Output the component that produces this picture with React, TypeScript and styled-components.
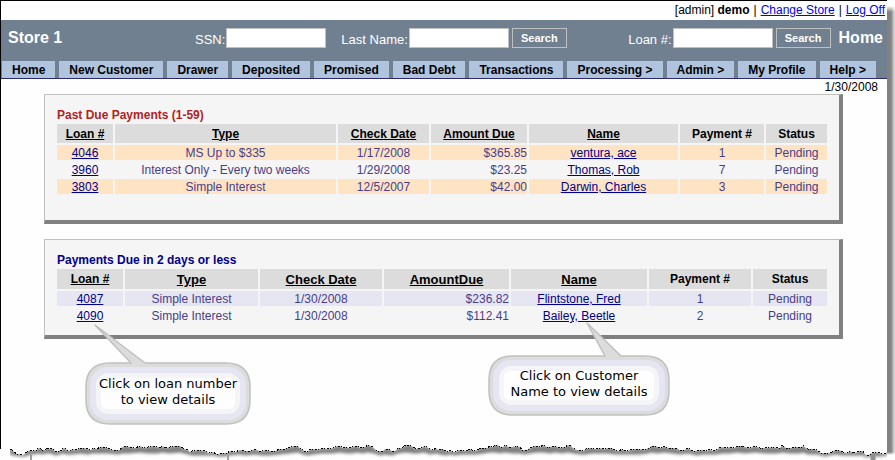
import React from "react";
import styled, { createGlobalStyle } from "styled-components";

const GlobalStyle = createGlobalStyle`
  *, *::before, *::after { box-sizing: border-box; }
  body {
    margin: 0;
    background: #fefefe;
    color: #000;
    font: 12px/15px "Liberation Sans", Arial, sans-serif;
  }
`;

const Page = styled.div`
  display: flex;
  min-height: 100vh;
`;

const Sheet = styled.div`
  flex: 1;
  min-width: 0;
  display: flex;
  flex-direction: column;
`;

const Content = styled.div`
  flex: 1;
  border-top: 1px solid #000;
  border-left: 1px solid #000;
`;

const EdgeShadow = styled.div`
  flex: 0 0 8px;
  margin: 6px 0 5px;
  background: linear-gradient(to right, #808080 0, #848484 4px, #b4b4b4 6px, #e4e4e4 8px);
  mask-image: linear-gradient(to bottom, transparent 0, #000 6px, #000 calc(100% - 3px), transparent 100%);
`;

const AccountBar = styled.div`
  display: flex;
  justify-content: flex-end;
  gap: 4px;
  height: 19px;
  padding: 2px 2px 0 0;
`;

const AccountLink = styled.a`
  color: #0000ff;
`;

const Header = styled.header`
  display: flex;
  align-items: flex-start;
  height: 41px;
  padding: 8px 4px 0 7px;
  background: #708090;
  color: #fff;
`;

const StoreName = styled.h1`
  width: 187px;
  margin: 0;
  font-size: 16px;
  line-height: 19px;
`;

const PageName = styled.h2`
  margin: 0 0 0 8px;
  font-size: 16px;
  line-height: 19px;
`;

const SearchForm = styled.form<{ $end?: boolean }>`
  display: flex;
  align-items: flex-start;
  gap: 3px;
  margin-left: ${(p) => (p.$end ? "auto" : "0")};
`;

const Field = styled.label`
  display: flex;
  align-items: flex-start;
  gap: 1px;
  font-size: 13px;

  & + & {
    margin-left: 12px;
  }
`;

const FieldName = styled.span`
  padding-top: 3px;
  line-height: 17px;
`;

const FieldInput = styled.input`
  width: 100px;
  height: 20px;
  padding: 0 3px;
  border: 1px solid #c0c0c0;
  border-radius: 0;
  background: #fff;
  font: inherit;
`;

const SearchButton = styled.button`
  width: 55px;
  height: 20px;
  padding: 0;
  border: 1px solid #c0c0c0;
  background: #708090;
  color: #fff;
  font: bold 11px/18px "Liberation Sans", Arial, sans-serif;
`;

const Nav = styled.nav`
  display: flex;
  gap: 4px;
  padding-left: 1px;
  border-bottom: 1px solid #2a2a6c;
  background: #708090;
`;

const NavLink = styled.a`
  padding: 1px 10px 0;
  background: #b0c4de;
  color: #000;
  font-weight: bold;
  line-height: 16px;
  text-decoration: none;
  white-space: nowrap;
`;

const DateLine = styled.div`
  padding: 1px 9px 0 0;
  line-height: 14px;
  text-align: right;
`;

const Panel = styled.section<{ $bottom: number }>`
  position: relative;
  margin: 0 44px 15px 43px;
  padding: 12px 10px ${(p) => p.$bottom}px;
  border: solid #808080;
  border-width: 1px 4px 4px 1px;
  border-top-color: #c0c0c0;
  border-left-color: #c0c0c0;
  background: #f5f5f5;
`;

const Grid = styled.table`
  width: 100%;
  table-layout: fixed;
  border-spacing: 2px;
`;

const Title = styled.caption<{ $color: string }>`
  padding: 1px 0 0 2px;
  color: ${(p) => p.$color};
  font-weight: bold;
  line-height: 14px;
  text-align: left;
`;

const Column = styled.col<{ $width: number }>`
  width: ${(p) => p.$width}px;
`;

const HeadCell = styled.th<{ $large?: boolean; $height: number }>`
  height: ${(p) => p.$height}px;
  padding: 1px 0 0;
  background: #dcdcdc;
  font-size: ${(p) => (p.$large ? 13 : 12)}px;
  vertical-align: middle;
`;

const SortLink = styled.a`
  color: #000;
`;

const Row = styled.tr<{ $stripe: string }>`
  &:nth-child(odd) > td {
    background: ${(p) => p.$stripe};
  }
`;

const Cell = styled.td<{ $align?: string }>`
  padding: 1px 0 0;
  color: #483d8b;
  line-height: 14px;
  text-align: ${(p) => p.$align ?? "center"};
  white-space: nowrap;
`;

const CellLink = styled.a`
  color: #00008b;
`;

const Callout = styled.aside<{ $left: number; $top: number; $width: number; $height: number; $pad: number }>`
  position: absolute;
  left: ${(p) => p.$left}px;
  top: ${(p) => p.$top}px;
  width: ${(p) => p.$width}px;
  height: ${(p) => p.$height}px;
  padding-top: ${(p) => p.$pad}px;
  font: 13px/16px "DejaVu Sans", Verdana, sans-serif;
  text-align: center;
  white-space: pre-line;
`;

const Bubble = styled.svg`
  position: absolute;
  inset: 0;
  width: 100%;
  height: 100%;
`;

const CalloutText = styled.p`
  position: relative;
  margin: 0;
`;

const Tear = styled.svg`
  display: block;
  width: 100%;
  height: 20px;
`;

const navItems = [
  "Home", "New Customer", "Drawer", "Deposited", "Promised", "Bad Debt",
  "Transactions", "Processing >", "Admin >", "My Profile", "Help >",
];

type Payment = [loan: string, type: string, date: string, amount: string, name: string, number: string, status: string];

interface HeadSpec {
  text: string;
  width: number;
  sortable?: boolean;
  large?: boolean;
}

const pastDueHeads: HeadSpec[] = [
  { text: "Loan #", width: 56, sortable: true },
  { text: "Type", width: 221, sortable: true },
  { text: "Check Date", width: 91, sortable: true },
  { text: "Amount Due", width: 96, sortable: true },
  { text: "Name", width: 149, sortable: true },
  { text: "Payment #", width: 84 },
  { text: "Status", width: 61 },
];

const pastDueRows: Payment[] = [
  ["4046", "MS Up to $335", "1/17/2008", "$365.85", "ventura, ace", "1", "Pending"],
  ["3960", "Interest Only - Every two weeks", "1/29/2008", "$23.25", "Thomas, Rob", "7", "Pending"],
  ["3803", "Simple Interest", "12/5/2007", "$42.00", "Darwin, Charles", "3", "Pending"],
];

const upcomingHeads: HeadSpec[] = [
  { text: "Loan #", width: 66, sortable: true },
  { text: "Type", width: 133, sortable: true, large: true },
  { text: "Check Date", width: 122, sortable: true, large: true },
  { text: "AmountDue", width: 125, sortable: true, large: true },
  { text: "Name", width: 136, sortable: true, large: true },
  { text: "Payment #", width: 102 },
  { text: "Status", width: 74 },
];

const upcomingRows: Payment[] = [
  ["4087", "Simple Interest", "1/30/2008", "$236.82", "Flintstone, Fred", "1", "Pending"],
  ["4090", "Simple Interest", "1/30/2008", "$112.41", "Bailey, Beetle", "2", "Pending"],
];

interface PaymentsProps {
  title: string;
  color: string;
  stripe: string;
  headHeight: number;
  heads: HeadSpec[];
  rows: Payment[];
}

function Payments({ title, color, stripe, headHeight, heads, rows }: PaymentsProps) {
  return (
    <Grid>
      <Title $color={color}>{title}</Title>
      <colgroup>
        {heads.map((h) => <Column key={h.text} $width={h.width} />)}
      </colgroup>
      <thead>
        <tr>
          {heads.map((h) => (
            <HeadCell key={h.text} scope="col" $large={h.large} $height={headHeight}>
              {h.sortable ? <SortLink href="#">{h.text}</SortLink> : h.text}
            </HeadCell>
          ))}
        </tr>
      </thead>
      <tbody>
        {rows.map(([loan, type, date, amount, name, number, status]) => (
          <Row key={loan} $stripe={stripe}>
            <Cell><CellLink href="#">{loan}</CellLink></Cell>
            <Cell>{type}</Cell>
            <Cell>{date}</Cell>
            <Cell $align="right">{amount}</Cell>
            <Cell><CellLink href="#">{name}</CellLink></Cell>
            <Cell>{number}</Cell>
            <Cell>{status}</Cell>
          </Row>
        ))}
      </tbody>
    </Grid>
  );
}

interface NoteProps {
  left: number;
  top: number;
  width: number;
  height: number;
  bodyTop: number;
  tip: [number, number];
  base: [number, number];
  textTop: number;
  text: string;
}

function Note({ left, top, width, height, bodyTop, tip, base, textTop, text }: NoteProps) {
  const r = 24;
  const l = 1;
  const t = bodyTop + 1;
  const right = width - 1;
  const bottom = height - 1;
  const outline =
    `M${l + r} ${t} H${base[0]} L${tip[0]} ${tip[1]} L${base[1]} ${t} H${right - r} ` +
    `Q${right} ${t} ${right} ${t + r} V${bottom - r} Q${right} ${bottom} ${right - r} ${bottom} ` +
    `H${l + r} Q${l} ${bottom} ${l} ${bottom - r} V${t + r} Q${l} ${t} ${l + r} ${t} Z`;
  const layers: [number, string, number][] = [
    [4, "#e6e6f2", 18],
    [10, "#f5f5f7", 12],
    [15, "#fefefe", 6],
  ];
  return (
    <Callout $left={left} $top={top} $width={width} $height={height} $pad={textTop}>
      <Bubble viewBox={`0 0 ${width} ${height}`} aria-hidden="true">
        <path d={outline} fill="#dcdcdc" stroke="#c0c0c0" strokeWidth="1.5" strokeLinejoin="round" />
        {layers.map(([inset, fill, radius]) => (
          <rect
            key={inset}
            x={l + inset}
            y={t + inset}
            width={right - l - inset * 2}
            height={bottom - t - inset * 2}
            rx={radius}
            fill={fill}
          />
        ))}
      </Bubble>
      <CalloutText>{text}</CalloutText>
    </Callout>
  );
}

const tearProfile: [number, number][] = [
  [10, 9], [13, 11], [20, 14], [25, 13], [31, 10], [35, 10], [38, 8], [42, 10], [47, 8], [51, 8], [55, 11], [60, 10],
  [63, 8], [67, 10], [72, 9], [80, 8], [88, 9], [93, 8], [100, 7], [108, 8], [118, 10], [122, 7], [130, 7], [140, 6],
  [148, 7], [158, 7], [162, 6], [170, 7], [180, 6], [188, 10], [192, 11], [205, 11], [213, 12], [218, 14], [224, 13],
  [230, 11], [240, 10], [245, 11], [255, 9], [262, 11], [270, 11], [280, 9], [290, 7], [298, 6], [303, 10], [308, 11],
  [313, 9], [322, 8], [333, 8], [340, 6], [346, 7], [352, 7], [358, 6], [362, 7], [368, 5], [374, 8], [380, 11],
  [385, 9], [392, 11], [398, 8], [406, 5], [413, 7], [418, 8], [424, 6], [430, 9], [436, 8], [440, 9], [446, 11],
  [450, 10], [455, 12], [462, 10], [470, 9], [477, 10], [484, 8], [490, 6], [495, 5], [500, 7], [505, 5], [512, 7],
  [520, 7], [524, 10], [530, 8], [537, 6], [543, 5], [550, 7], [556, 6], [562, 7], [568, 5], [573, 8], [580, 10],
  [586, 9], [592, 8], [600, 8], [608, 8], [615, 10], [622, 9], [630, 10], [640, 9], [648, 8], [651, 6], [658, 7],
  [664, 6], [672, 8], [680, 10], [688, 8], [697, 11], [703, 10], [710, 9], [716, 10], [722, 7], [730, 7], [737, 6],
  [745, 7], [755, 6], [765, 8], [778, 8], [782, 5], [790, 8], [800, 7], [803, 5], [808, 9], [817, 10], [825, 13],
  [835, 10], [843, 12], [850, 11], [857, 12], [863, 11], [866, 15], [872, 13], [880, 13], [887, 12],
];

// Adds one-pixel teeth between the profile's points.
const teeth: [number, number][] = tearProfile.flatMap(([x, y], i) => {
  const next = tearProfile[i + 1];
  if (!next) return [[x, y]] as [number, number][];
  const mid = Math.round((x + next[0]) / 2);
  const lift = i % 3 === 0 ? -1 : 1;
  return [[x, y], [mid, Math.round((y + next[1]) / 2) + lift]] as [number, number][];
});

const tearLine = teeth.map((p) => p.join(",")).join(" ");
const shadowBand =
  tearLine + " " + [...tearProfile].reverse().map(([x, y]) => `${x},${Math.round(y / 2) + 9}`).join(" ");

function TornEdge() {
  return (
    <Tear viewBox="0 0 887 20" preserveAspectRatio="none" aria-hidden="true">
      <defs>
        <filter id="soften" x="-5%" y="-50%" width="110%" height="200%">
          <feGaussianBlur stdDeviation="1.5" />
        </filter>
        <clipPath id="below">
          <polygon points={`${tearLine} 887,20 10,20`} />
        </clipPath>
      </defs>
      <rect x="0" y="0" width="1" height="9" fill="#000" />
      <g clipPath="url(#below)">
        <polygon points={shadowBand} fill="#808080" stroke="#808080" strokeWidth="1" filter="url(#soften)" />
      </g>
      <path d="M31 14V20M228 14V20" stroke="#a0a0a0" strokeWidth="2" />
      <path d="M873 14V20" stroke="#909090" strokeWidth="5" />
      <polyline
        points={tearLine}
        fill="none"
        stroke="#000"
        strokeWidth="1"
        strokeDasharray="2 1 1 2"
        shapeRendering="crispEdges"
      />
    </Tear>
  );
}

export default function App() {
  return (
    <Page>
      <GlobalStyle />
      <Sheet>
        <Content>
          <AccountBar>
            <span>[admin] <b>demo</b></span>
            <span>|</span>
            <AccountLink href="#">Change Store</AccountLink>
            <span>|</span>
            <AccountLink href="#">Log Off</AccountLink>
          </AccountBar>
          <Header>
            <StoreName>Store 1</StoreName>
            <SearchForm>
              <Field><FieldName>SSN:</FieldName><FieldInput type="text" name="ssn" /></Field>
              <Field><FieldName>Last Name:</FieldName><FieldInput type="text" name="lastName" /></Field>
              <SearchButton type="button">Search</SearchButton>
            </SearchForm>
            <SearchForm $end>
              <Field><FieldName>Loan #:</FieldName><FieldInput type="text" name="loan" /></Field>
              <SearchButton type="button">Search</SearchButton>
            </SearchForm>
            <PageName>Home</PageName>
          </Header>
          <Nav>
            {navItems.map((item) => <NavLink key={item} href="#">{item}</NavLink>)}
          </Nav>
          <DateLine>1/30/2008</DateLine>
          <Panel $bottom={24}>
            <Payments
              title="Past Due Payments (1-59)"
              color="#b22222"
              stripe="#ffe4c4"
              headHeight={19}
              heads={pastDueHeads}
              rows={pastDueRows}
            />
          </Panel>
          <Panel $bottom={10}>
            <Payments
              title="Payments Due in 2 days or less"
              color="#00008b"
              stripe="#e6e6f2"
              headHeight={20}
              heads={upcomingHeads}
              rows={upcomingRows}
            />
            <Note
              left={40} top={84} width={166} height={101} bodyTop={38}
              tip={[10, 1]} base={[46, 60]} textTop={52}
              text={"Click on loan number\nto view details"}
            />
            <Note
              left={443} top={82} width={182} height={94} bodyTop={33}
              tip={[99, 1]} base={[117, 133]} textTop={46}
              text={"Click on Customer\nName to view details"}
            />
          </Panel>
        </Content>
        <TornEdge />
      </Sheet>
      <EdgeShadow />
    </Page>
  );
}
